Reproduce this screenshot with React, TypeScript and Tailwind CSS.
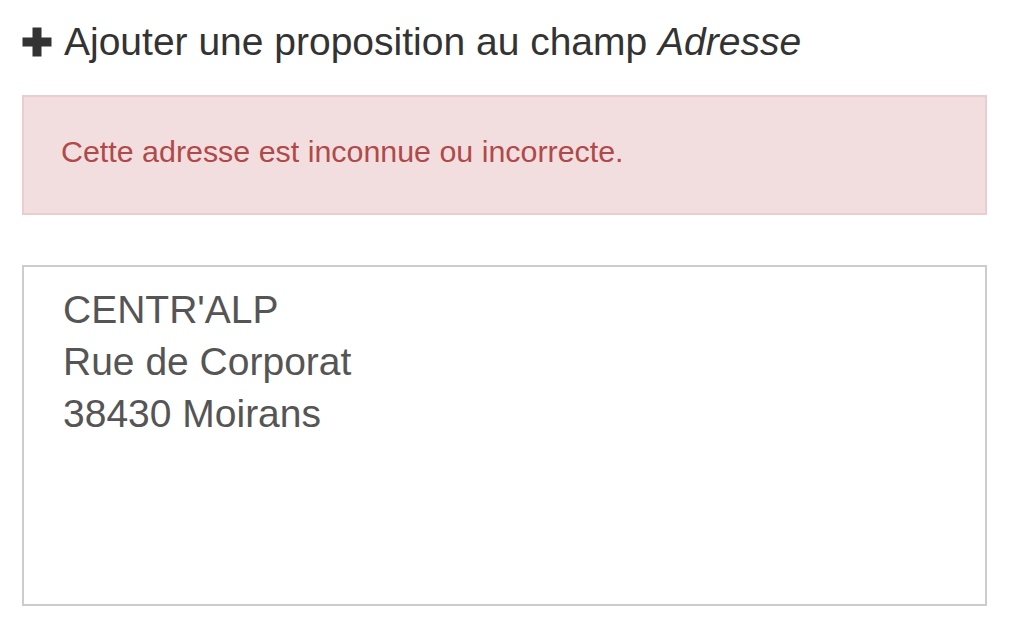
export default function App() {
  return (
    <div className="min-h-screen bg-white pl-[22px] pr-[37px] pt-[20px]" style={{ fontFamily: '"Liberation Sans", Arial, sans-serif' }}>
      <div className="flex h-[44px] items-center text-[39px] leading-[44px] text-[#333]">
        <svg width="30" height="30" viewBox="0 0 30 30" className="mr-[12px] shrink-0" aria-hidden="true">
          <path d="M10.5 0.5h9v10h10v9h-10v10h-9v-10h-10v-9h10z" fill="#333" />
        </svg>
        <span>
          Ajouter une proposition au champ <em>Adresse</em>
        </span>
      </div>
      <div className="mt-[31px] h-[120px] border-2 border-[#ebccd1] bg-[#f2dede] pl-[37px] pt-[33px] text-[30.4px] leading-[43px] text-[#b0494a]">
        Cette adresse est inconnue ou incorrecte.
      </div>
      <div className="mt-[50px] h-[341px] border-2 border-[#cccccc] pl-[39px] pt-[17px] text-[39px] leading-[52px] text-[#555]">
        <div>CENTR'ALP</div>
        <div>Rue de Corporat</div>
        <div>38430 Moirans</div>
      </div>
    </div>
  );
}
